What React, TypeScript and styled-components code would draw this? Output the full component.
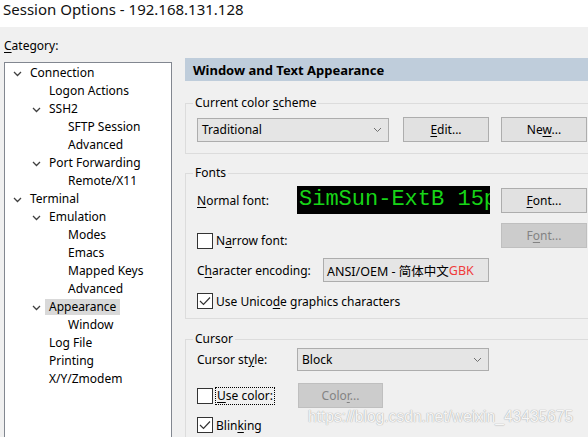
import React from "react";
import styled, { createGlobalStyle } from "styled-components";

const Global = createGlobalStyle`
  html, body { margin: 0; padding: 0; background: #f0f0f0; }
  body { font-family: "Noto Sans", "Liberation Sans", sans-serif; font-size: 12px; color: #000; }
`;

const Window = styled.div`
  position: relative;
  width: 588px;
  height: 437px;
  overflow: hidden;
  display: flex;
  flex-direction: column;
  background: #f0f0f0;
`;

const TitleBar = styled.div`
  height: 27px;
  flex: none;
  background: #fff;
  padding-left: 3px;
  font-size: 15px;
  line-height: 18px;
  color: #111;
  white-space: nowrap;
`;

const Body = styled.div`
  flex: 1;
  display: flex;
  min-height: 0;
`;

const Sidebar = styled.div`
  width: 181px;
  flex: none;
  padding-left: 4px;
  display: flex;
  flex-direction: column;
`;

const CategoryLabel = styled.div`
  flex: none;
  margin-top: 11px;
  line-height: 16px;
  margin-bottom: 8px;
`;

const Key = styled.span`
  text-decoration: underline;
  text-underline-offset: 2px;
`;

const Tree = styled.div`
  width: 168px;
  flex: 1;
  box-sizing: border-box;
  border: 1px solid #828790;
  border-bottom: none;
  background: #fff;
  padding-top: 1px;
`;

const TreeRow = styled.div<{ $level: number }>`
  height: 18px;
  display: flex;
  align-items: center;
  padding-left: ${(p) => 6 + p.$level * 19}px;
`;

const ChevronSlot = styled.span`
  width: 19px;
  flex: none;
  display: flex;
  align-items: center;
  padding-left: 2px;
  box-sizing: border-box;
  height: 18px;
  padding-top: 2px;
`;

const TreeText = styled.span<{ $selected?: boolean }>`
  line-height: 16px;
  padding: 0 4px;
  margin-left: -4px;
  background: ${(p) => (p.$selected ? "#d9d9d9" : "transparent")};
`;

const Panel = styled.div`
  width: 420px;
  flex: none;
  padding-top: 31px;
  display: flex;
  flex-direction: column;
`;

const Header = styled.div`
  height: 23px;
  flex: none;
  background: #bfcddb;
  padding-left: 8px;
  display: flex;
  align-items: center;
  font-weight: bold;
  font-size: 13px;
`;

const Group = styled.fieldset<{ $top: number; $pt: number; $pb: number }>`
  flex: none;
  margin: ${(p) => p.$top}px 0 0 0;
  border: 1px solid #dcdcdc;
  padding: ${(p) => p.$pt}px 0 ${(p) => p.$pb}px 11px;
  min-width: 0;
`;

const Legend = styled.legend`
  margin-left: -4px;
  padding: 0 2px;
  line-height: 16px;
  font-size: 12px;
`;

const Row = styled.div<{ $mt?: number; $h: number; $align?: string }>`
  display: flex;
  align-items: ${(p) => p.$align ?? "center"};
  height: ${(p) => p.$h}px;
  margin-top: ${(p) => p.$mt ?? 0}px;
`;

const FieldLabel = styled.span<{ $w: number }>`
  width: ${(p) => p.$w}px;
  flex: none;
  white-space: nowrap;
`;

const Combo = styled.div<{ $w: number; $h: number; $mr?: number }>`
  width: ${(p) => p.$w}px;
  height: ${(p) => p.$h}px;
  margin-right: ${(p) => p.$mr ?? 0}px;
  flex: none;
  box-sizing: border-box;
  border: 1px solid #adadad;
  background: #e5e5e5;
  display: flex;
  align-items: center;
  justify-content: space-between;
  padding: 0 6px 0 4px;
`;

const Button = styled.div<{ $w?: number; $disabled?: boolean; $mr?: number }>`
  width: ${(p) => p.$w ?? 86}px;
  height: 25px;
  margin-right: ${(p) => p.$mr ?? 0}px;
  flex: none;
  box-sizing: border-box;
  border: 1px solid ${(p) => (p.$disabled ? "#bfbfbf" : "#adadad")};
  background: ${(p) => (p.$disabled ? "#cccccc" : "#e1e1e1")};
  color: ${(p) => (p.$disabled ? "#838383" : "#000")};
  display: flex;
  align-items: center;
  justify-content: center;
`;

const Spacer = styled.div<{ $w: number; $pt?: number }>`
  width: ${(p) => p.$w}px;
  flex: none;
  display: flex;
  align-items: center;
  padding-top: ${(p) => p.$pt ?? 0}px;
`;

const FontPreview = styled.div`
  width: 193px;
  height: 28px;
  margin-right: 11px;
  flex: none;
  background: #000;
  color: #17d417;
  font-family: "Liberation Mono", "DejaVu Sans Mono", monospace;
  font-size: 22px;
  line-height: 28px;
  padding-left: 2px;
  box-sizing: border-box;
  overflow: hidden;
  white-space: nowrap;
`;

const EncodingBox = styled.div`
  width: 166px;
  height: 24px;
  flex: none;
  box-sizing: border-box;
  border: 1px solid #adadad;
  background: #e5e5e5;
  display: flex;
  align-items: center;
  padding-left: 3px;
  font-size: 12.5px;
  font-family: "Noto Sans", "Noto Sans CJK SC", sans-serif;
  white-space: nowrap;
  overflow: hidden;
`;

const Red = styled.span`
  color: #f03a3a;
`;

const Check = styled.span`
  width: 16px;
  height: 16px;
  flex: none;
  box-sizing: border-box;
  border: 1px solid #333;
  background: #fff;
  margin-right: 3px;
  display: flex;
  align-items: center;
  justify-content: center;
`;

const FocusLabel = styled.span`
  outline: 1px dotted #000;
  padding: 0 1px;
  line-height: 16px;
`;

const Watermark = styled.div`
  position: absolute;
  left: 308px;
  top: 408px;
  font-family: "Liberation Sans", sans-serif;
  font-size: 15.6px;
  color: #f6f6f6;
  text-shadow: 0 0 1px #a8a8a8, 0 0 1px #b8b8b8;
  white-space: nowrap;
  pointer-events: none;
`;

const Chevron = () => (
  <svg width="9" height="6" viewBox="0 0 9 6">
    <polyline points="1,1 4.5,4.5 8,1" fill="none" stroke="#404040" strokeWidth="1.3" />
  </svg>
);

const ComboArrow = () => (
  <svg width="9" height="6" viewBox="0 0 9 6">
    <polyline points="1,1 4.5,4.5 8,1" fill="none" stroke="#707070" strokeWidth="1" />
  </svg>
);

const Tick = () => (
  <svg width="12" height="10" viewBox="0 0 12 10">
    <polyline points="1,5 4.5,8.5 11,1.5" fill="none" stroke="#333" strokeWidth="1.2" />
  </svg>
);

type Node = { label: string; level: number; open?: boolean; selected?: boolean };

const nodes: Node[] = [
  { label: "Connection", level: 0, open: true },
  { label: "Logon Actions", level: 1 },
  { label: "SSH2", level: 1, open: true },
  { label: "SFTP Session", level: 2 },
  { label: "Advanced", level: 2 },
  { label: "Port Forwarding", level: 1, open: true },
  { label: "Remote/X11", level: 2 },
  { label: "Terminal", level: 0, open: true },
  { label: "Emulation", level: 1, open: true },
  { label: "Modes", level: 2 },
  { label: "Emacs", level: 2 },
  { label: "Mapped Keys", level: 2 },
  { label: "Advanced", level: 2 },
  { label: "Appearance", level: 1, open: true, selected: true },
  { label: "Window", level: 2 },
  { label: "Log File", level: 1 },
  { label: "Printing", level: 1 },
  { label: "X/Y/Zmodem", level: 1 },
];

export default function App() {
  return (
    <>
      <Global />
      <Window>
        <TitleBar>Session Options - 192.168.131.128</TitleBar>
        <Body>
          <Sidebar>
            <CategoryLabel>
              <Key>C</Key>ategory:
            </CategoryLabel>
            <Tree>
              {nodes.map((n, i) => (
                <TreeRow key={i} $level={n.level}>
                  <ChevronSlot>{n.open ? <Chevron /> : null}</ChevronSlot>
                  <TreeText $selected={n.selected}>{n.label}</TreeText>
                </TreeRow>
              ))}
            </Tree>
          </Sidebar>
          <Panel>
            <Header>Window and Text Appearance</Header>
            <Group $top={14} $pt={6} $pb={11}>
              <Legend>
                Current color <Key>s</Key>cheme
              </Legend>
              <Row $h={25}>
                <Combo $w={192} $h={24} $mr={14}>
                  <span>Traditional</span>
                  <ComboArrow />
                </Combo>
                <Button $mr={12}>
                  <span>
                    <Key>E</Key>dit...
                  </span>
                </Button>
                <Button>
                  <span>
                    Ne<Key>w</Key>...
                  </span>
                </Button>
              </Row>
            </Group>
            <Group $top={11} $pt={5} $pb={9}>
              <Legend>Fonts</Legend>
              <Row $h={28}>
                <FieldLabel $w={100}>
                  <Key>N</Key>ormal font:
                </FieldLabel>
                <FontPreview>SimSun-ExtB 15pt</FontPreview>
                <Button>
                  <span>
                    <Key>F</Key>ont...
                  </span>
                </Button>
              </Row>
              <Row $h={25} $mt={9} $align="flex-start">
                <Spacer $w={304} $pt={9}>
                  <Check />
                  <span>
                    N<Key>a</Key>rrow font:
                  </span>
                </Spacer>
                <Button $disabled>
                  <span>
                    F<Key>o</Key>nt...
                  </span>
                </Button>
              </Row>
              <Row $h={24} $mt={10}>
                <FieldLabel $w={126}>
                  C<Key>h</Key>aracter encoding:
                </FieldLabel>
                <EncodingBox>
                  ANSI/OEM - 简体中文<Red>GBK</Red>
                </EncodingBox>
              </Row>
              <Row $h={16} $mt={11}>
                <Check>
                  <Tick />
                </Check>
                <span>
                  Use Unico<Key>d</Key>e graphics characters
                </span>
              </Row>
            </Group>
            <Group $top={12} $pt={1} $pb={20}>
              <Legend>Cursor</Legend>
              <Row $h={23}>
                <FieldLabel $w={100}>
                  Cursor st<Key>y</Key>le:
                </FieldLabel>
                <Combo $w={192} $h={23}>
                  <span>Block</span>
                  <ComboArrow />
                </Combo>
              </Row>
              <Row $h={25} $mt={12}>
                <Spacer $w={101}>
                  <Check />
                  <FocusLabel>
                    <Key>U</Key>se color:
                  </FocusLabel>
                </Spacer>
                <Button $w={85} $disabled>
                  <span>
                    Colo<Key>r</Key>...
                  </span>
                </Button>
              </Row>
              <Row $h={16} $mt={9}>
                <Check>
                  <Tick />
                </Check>
                <span>
                  Blin<Key>k</Key>ing
                </span>
              </Row>
            </Group>
          </Panel>
        </Body>
        <Watermark>https://blog.csdn.net/weixin_43435675</Watermark>
      </Window>
    </>
  );
}
